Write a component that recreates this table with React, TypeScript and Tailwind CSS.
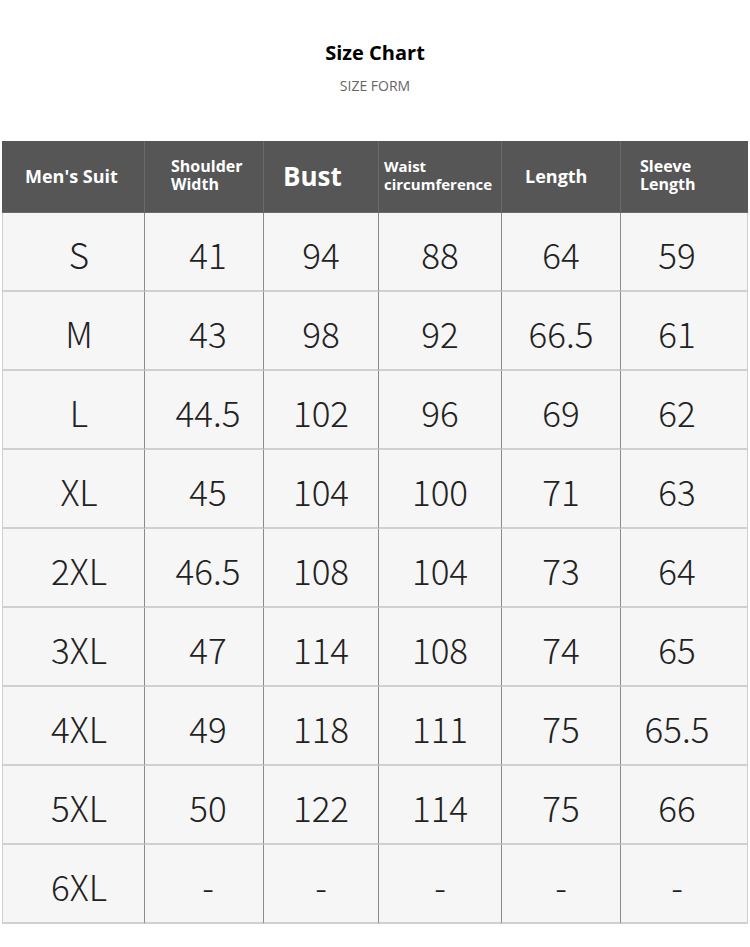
import React from 'react';

const headers = [
  { lines: ["Men's Suit"], size: 'text-[18px]', pad: 'pl-[23px]' },
  { lines: ['Shoulder', 'Width'], size: 'text-[16px]', pad: 'pl-[26px]' },
  { lines: ['Bust'], size: 'text-[26px]', pad: 'pl-[19px]' },
  { lines: ['Waist', 'circumference'], size: 'text-[15px]', pad: 'pl-[5px]' },
  { lines: ['Length'], size: 'text-[18px]', pad: 'pl-[23px]' },
  { lines: ['Sleeve', 'Length'], size: 'text-[16px]', pad: 'pl-[19px]' },
];

// horizontal nudges so each value sits where the reference has it
const colPad = ['pl-[11px]', 'pl-[8px]', '', '', '', 'pr-[14px]'];

const rows = [
  ['S', '41', '94', '88', '64', '59'],
  ['M', '43', '98', '92', '66.5', '61'],
  ['L', '44.5', '102', '96', '69', '62'],
  ['XL', '45', '104', '100', '71', '63'],
  ['2XL', '46.5', '108', '104', '73', '64'],
  ['3XL', '47', '114', '108', '74', '65'],
  ['4XL', '49', '118', '111', '75', '65.5'],
  ['5XL', '50', '122', '114', '75', '66'],
  ['6XL', '-', '-', '-', '-', '-'],
];

export default function App() {
  return (
    <div className="w-[750px] h-[947px] bg-white">
      <div className="h-[141px] flex flex-col items-center pt-[39px]">
        <h1 className="text-[20px] font-bold text-black leading-[28px] font-['Open_Sans',sans-serif]">
          Size Chart
        </h1>
        <p className="mt-[10px] text-[14px] text-[#666] leading-[18px] font-['Open_Sans',sans-serif]">
          SIZE FORM
        </p>
      </div>

      <div className="ml-[2px] w-[746px] grid grid-cols-[143px_119px_115px_123px_119px_127px] font-['Open_Sans',sans-serif]">
        {headers.map((h, i) => (
          <div
            key={i}
            className={`h-[72px] bg-[#565656] flex items-center ${h.pad} ${i < 5 ? 'border-r border-[#3c3c3c]' : ''} border-b border-[#6a6a6a]`}
          >
            <div className={`${h.size} font-bold text-white leading-[18px] ${h.lines.length > 1 ? 'pb-[4px]' : 'pb-[2px]'}`}>
              {h.lines.map(l => (
                <div key={l}>{l}</div>
              ))}
            </div>
          </div>
        ))}

        {rows.map((r, ri) =>
          r.map((c, ci) => (
            <div
              key={`${ri}-${ci}`}
              className={`h-[79px] bg-[#f6f6f6] flex items-center justify-center pt-[6px] border-b-2 border-b-[#d0d0d0] ${ci < 5 ? 'border-r border-r-[#8a8a8a]' : 'border-r border-r-[#d0d0d0]'} ${ci === 0 ? 'border-l border-l-[#d0d0d0]' : ''} ${colPad[ci]} text-[35px] font-light text-[#222] font-['Noto_Sans_CJK_SC','Noto_Sans',sans-serif]`}
            >
              {c}
            </div>
          ))
        )}
      </div>
    </div>
  );
}
